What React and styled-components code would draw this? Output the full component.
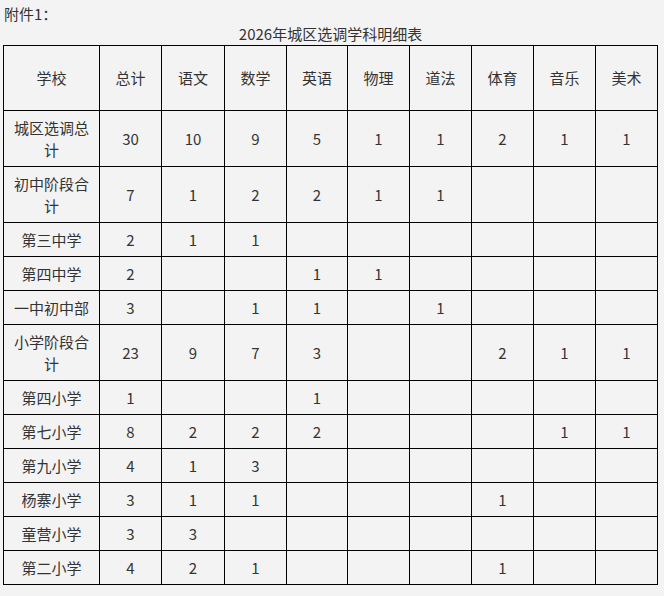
import React from "react";
import styled, { createGlobalStyle } from "styled-components";

const Global = createGlobalStyle`
  html, body { margin: 0; padding: 0; background: #f3f3f3; }
  body { font-family: "Noto Sans CJK SC", "Microsoft YaHei", sans-serif; color: #333; }
`;

const Page = styled.div`
  padding: 3px 3px 0 3px;
  width: 658px;
  box-sizing: border-box;
`;

const Note = styled.p`
  margin: 0;
  font-size: 15px;
  line-height: 21px;
  padding-left: 1px;
`;

const Title = styled.div`
  width: 655px;
  text-align: center;
  font-size: 15px;
  line-height: 19px;
  padding-bottom: 2px;
`;

const Table = styled.table`
  border-collapse: collapse;
  table-layout: fixed;
  width: 654px;
`;

const Cell = styled.td`
  border: 1px solid #000;
  text-align: center;
  vertical-align: middle;
  font-size: 15px;
  line-height: 22px;
  padding: 0 5px;
  height: ${(p) => p.$h}px;
  box-sizing: border-box;
  word-break: break-all;
`;

const widths = [96, 62, 63, 62, 61, 62, 62, 62, 62, 62];

const header = ["学校", "总计", "语文", "数学", "英语", "物理", "道法", "体育", "音乐", "美术"];

const rows = [
  ["城区选调总计", "30", "10", "9", "5", "1", "1", "2", "1", "1"],
  ["初中阶段合计", "7", "1", "2", "2", "1", "1", "", "", ""],
  ["第三中学", "2", "1", "1", "", "", "", "", "", ""],
  ["第四中学", "2", "", "", "1", "1", "", "", "", ""],
  ["一中初中部", "3", "", "1", "1", "", "1", "", "", ""],
  ["小学阶段合计", "23", "9", "7", "3", "", "", "2", "1", "1"],
  ["第四小学", "1", "", "", "1", "", "", "", "", ""],
  ["第七小学", "8", "2", "2", "2", "", "", "", "1", "1"],
  ["第九小学", "4", "1", "3", "", "", "", "", "", ""],
  ["杨寨小学", "3", "1", "1", "", "", "", "1", "", ""],
  ["童营小学", "3", "3", "", "", "", "", "", "", ""],
  ["第二小学", "4", "2", "1", "", "", "", "1", "", ""],
];

export default function App() {
  return (
    <Page>
      <Global />
      <Note>附件1：</Note>
      <Title>2026年城区选调学科明细表</Title>
      <Table>
        <colgroup>
          {widths.map((w, i) => (
            <col key={i} style={{ width: w }} />
          ))}
        </colgroup>
        <tbody>
          <tr>
            {header.map((h, i) => (
              <Cell key={i} $h={65}>{h}</Cell>
            ))}
          </tr>
          {rows.map((r, ri) => {
            const tall = r[0].length > 5;
            return (
              <tr key={ri}>
                {r.map((c, ci) => (
                  <Cell key={ci} $h={tall ? 56 : 34}>{c}</Cell>
                ))}
              </tr>
            );
          })}
        </tbody>
      </Table>
    </Page>
  );
}
